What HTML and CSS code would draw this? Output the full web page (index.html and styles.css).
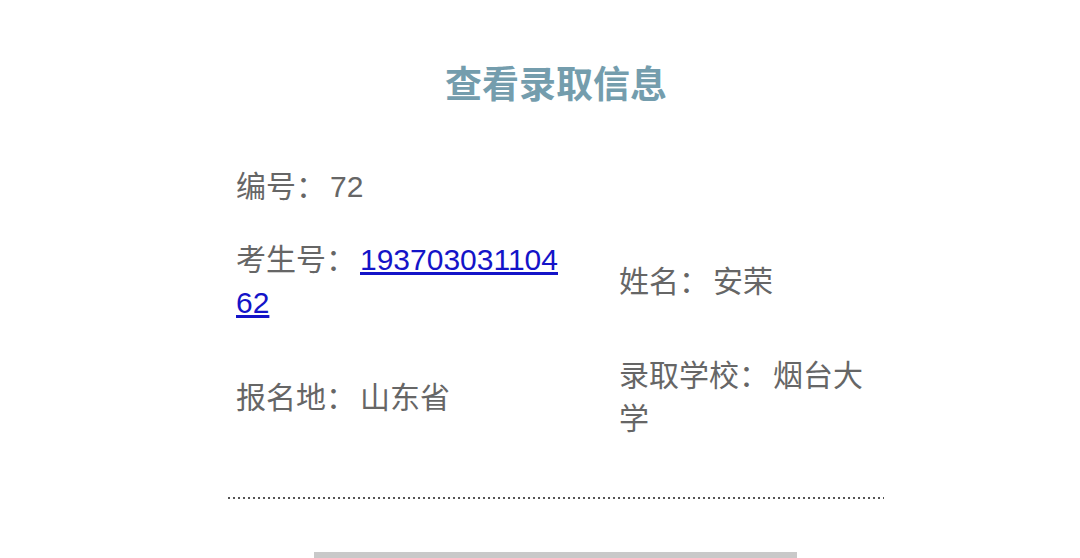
FILE: index.html
```html
<!DOCTYPE html>
<html lang="zh-CN">
<head>
<meta charset="utf-8">
<title>查看录取信息</title>
<link rel="stylesheet" href="styles.css">
</head>
<body>
<div class="page">
  <h1 class="title">查看录取信息</h1>
  <table class="info">
    <colgroup><col class="c1"><col class="c2"></colgroup>
    <tr>
      <td class="left">编号<span class="colon">：</span>72</td>
      <td class="right"></td>
    </tr>
    <tr>
      <td class="left">考生号<span class="colon">：</span><a class="num" href="#">19370303110462</a></td>
      <td class="right">姓名<span class="colon">：</span>安荣</td>
    </tr>
    <tr>
      <td class="left">报名地<span class="colon">：</span>山东省</td>
      <td class="right">录取学校<span class="colon">：</span>烟台大学</td>
    </tr>
  </table>
  <div class="divider"></div>
  <div class="btn"></div>
</div>
</body>
</html>
```
FILE: styles.css
```css
html, body {
  margin: 0;
  padding: 0;
  background: #ffffff;
  overflow: hidden;
}
body {
  font-family: "Liberation Sans", "Noto Sans CJK SC", sans-serif;
  color: #666666;
}
.page {
  width: 656px;
  margin-left: 228px;
  padding-top: 61px;
}
.title {
  margin: 0 0 39px 0;
  font-size: 37px;
  line-height: 50px;
  font-weight: bold;
  color: #749dad;
  text-align: center;
}
.info {
  width: 656px;
  border-collapse: collapse;
  table-layout: fixed;
}
.c1 { width: 383px; }
.c2 { width: 273px; }
.info td {
  font-size: 30px;
  line-height: 43px;
  padding: 15px 8px;
  vertical-align: middle;
  word-break: break-all;
}
.info td.left {
  padding-right: 46px;
}
.colon {
  margin-right: 4px;
}
.num {
  color: #1414c8;
  text-decoration: underline;
}
.divider {
  margin-top: 42px;
  height: 2px;
  background-image: linear-gradient(to right, #555555 50%, transparent 50%);
  background-size: 5px 2px;
  background-repeat: repeat-x;
}
.btn {
  width: 483px;
  height: 40px;
  margin: 53px 0 0 86px;
  background: #c9c9c9;
}
```
